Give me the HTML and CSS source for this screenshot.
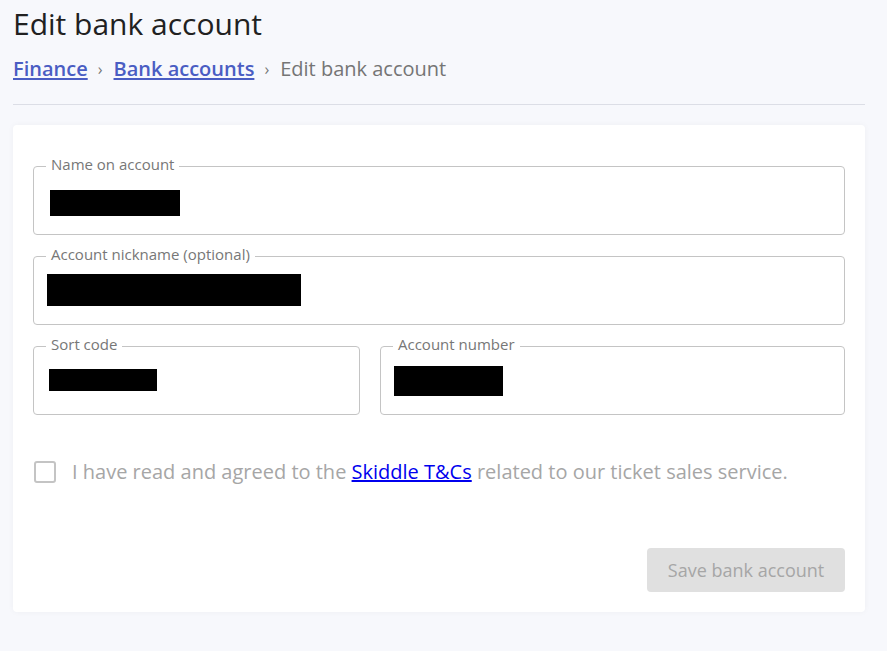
FILE: index.html
```html
<!DOCTYPE html>
<html lang="en">
<head>
<meta charset="utf-8">
<title>Edit bank account</title>
<link rel="stylesheet" href="styles.css">
</head>
<body>
<main class="page">
  <h1 class="title">Edit bank account</h1>
  <nav class="crumbs">
    <a href="#" class="crumb-link">Finance</a>
    <span class="crumb-sep">›</span>
    <a href="#" class="crumb-link">Bank accounts</a>
    <span class="crumb-sep">›</span>
    <span class="crumb-current">Edit bank account</span>
  </nav>
  <hr class="divider">
  <form class="card">
    <fieldset class="field">
      <legend class="field-label">Name on account</legend>
      <div class="field-input"><span class="redact r-name"></span></div>
    </fieldset>
    <fieldset class="field">
      <legend class="field-label">Account nickname (optional)</legend>
      <div class="field-input"><span class="redact r-nick"></span></div>
    </fieldset>
    <div class="field-row">
      <fieldset class="field">
        <legend class="field-label">Sort code</legend>
        <div class="field-input"><span class="redact r-sort"></span></div>
      </fieldset>
      <fieldset class="field">
        <legend class="field-label">Account number</legend>
        <div class="field-input"><span class="redact r-acct"></span></div>
      </fieldset>
    </div>
    <label class="agree">
      <span class="checkbox"></span>
      <span class="agree-text">I have read and agreed to the <a href="#" class="tc-link">Skiddle T&amp;Cs</a> related to our ticket sales service.</span>
    </label>
    <div class="actions">
      <button type="button" class="save-btn" disabled>Save bank account</button>
    </div>
  </form>
</main>
</body>
</html>
```

FILE: styles.css
```css
* { box-sizing: border-box; }

html, body {
  margin: 0;
  padding: 0;
  background: #f7f8fc;
  font-family: "Open Sans", "Liberation Sans", sans-serif;
}

.page {
  padding: 0 22px 40px 13px;
}

.title {
  margin: 6px 0 0;
  font-size: 30px;
  line-height: 36px;
  font-weight: 400;
  color: #212121;
}

.crumbs {
  margin-top: 13px;
  display: flex;
  align-items: center;
  font-size: 20px;
  line-height: 28px;
}

.crumb-link {
  color: #4a5dc3;
  font-weight: 600;
  text-decoration: underline;
  text-underline-offset: 2px;
}

.crumb-sep {
  color: #777;
  font-size: 16px;
  margin: 0 11px 0 10px;
}

.crumb-current {
  color: #757575;
}

.divider {
  margin: 21px 0 0;
  border: 0;
  border-top: 1px solid #dcdee6;
  height: 0;
}

.card {
  margin-top: 20px;
  background: #fff;
  border-radius: 4px;
  box-shadow: 0 0 6px rgba(0, 0, 0, 0.04);
  padding: 29px 20px 20px;
  display: flex;
  flex-direction: column;
  gap: 9px;
}

.field {
  margin: 0;
  min-width: 0;
  border: 1px solid #c4c4c4;
  border-radius: 4px;
  padding: 0 12px;
}

.field-label {
  padding: 0 5px 4px;
  font-size: 15px;
  line-height: 20px;
  color: #777;
}

.field-input {
  height: 56px;
  display: flex;
  align-items: flex-start;
}

.redact {
  display: block;
  background: #000;
}

.r-name { width: 130px; height: 26px; margin: 12px 0 0 4px; }
.r-nick { width: 254px; height: 32px; margin: 6px 0 0 1px; }
.r-sort { width: 108px; height: 22px; margin: 11px 0 0 3px; }
.r-acct { width: 109px; height: 30px; margin: 8px 0 0 1px; }

.field-row {
  display: grid;
  grid-template-columns: 327px 1fr;
  gap: 20px;
}

.agree {
  margin-top: 34px;
  display: flex;
  align-items: center;
  gap: 16px;
  padding-left: 1px;
}

.checkbox {
  width: 22px;
  height: 22px;
  border: 2px solid #c4c4c4;
  border-radius: 3px;
  flex: none;
}

.agree-text {
  font-size: 20px;
  line-height: 28px;
  color: #a6a6a6;
}

.tc-link {
  color: #0000ee;
  text-decoration: underline;
}

.actions {
  margin-top: 53px;
  display: flex;
  justify-content: flex-end;
}

.save-btn {
  width: 198px;
  height: 44px;
  border: 0;
  border-radius: 4px;
  background: #e0e0e0;
  color: #a6a6a6;
  font-family: "Open Sans", "Liberation Sans", sans-serif;
  font-size: 18px;
  padding: 0;
}
```
